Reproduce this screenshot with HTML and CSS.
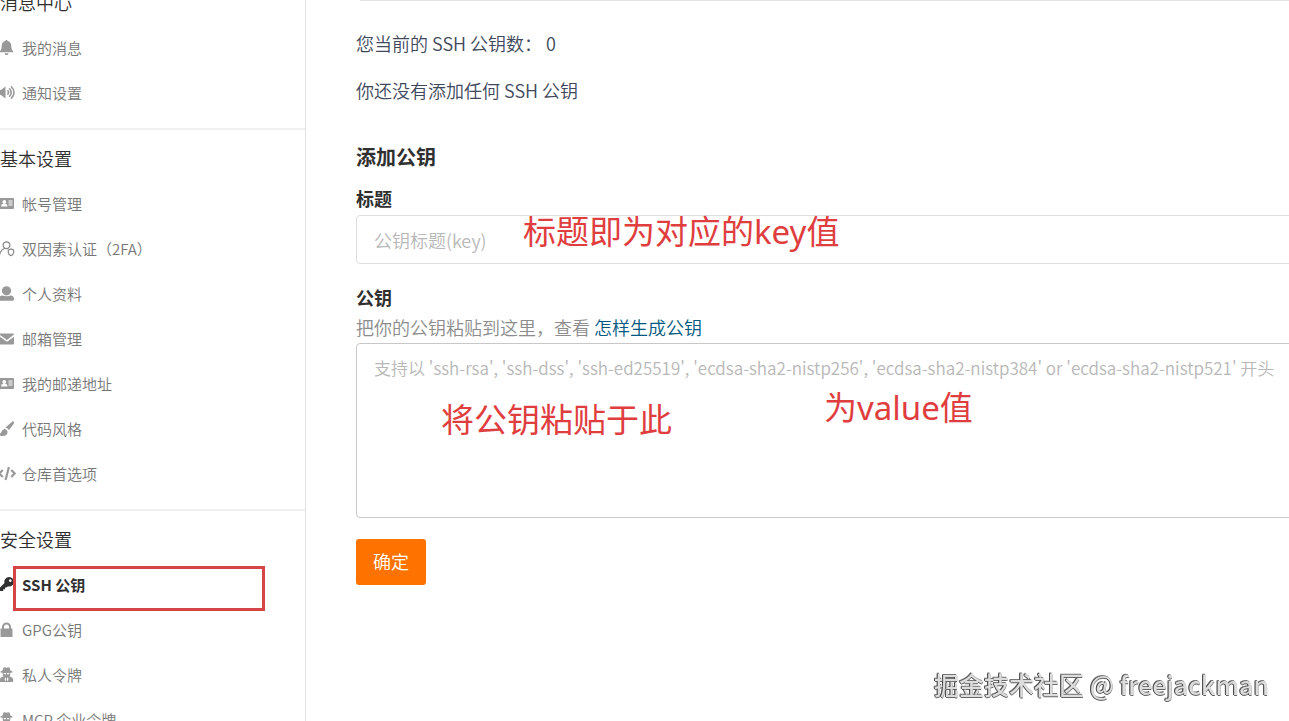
FILE: index.html
```html
<!DOCTYPE html>
<html lang="zh-CN">

<head>
<meta charset="utf-8">
<title>SSH 公钥</title>
<link rel="stylesheet" href="styles.css">
</head>

<body>
    <!-- icon shapes used by the menu -->
    <svg class="sprite" aria-hidden="true">
        <symbol id="i-bell" viewBox="0 0 16 16"><path d="M6.500 0c.8 0 1.100.5 1.100 1.100 2.300.5 3.700 2.300 3.700 4.800 0 2.700.8 4.200 2 5.500v.9H-.2v-.9c1.200-1.300 1.900-2.800 1.900-5.500C1.700 3.400 3.100 1.600 5.400 1.100c0-.6.3-1.100 1.100-1.100zM4.600 13.200h3.800c0 1.200-.8 1.900-1.900 1.900s-1.900-.7-1.900-1.900z"/></symbol>
        <symbol id="i-sound" viewBox="0 0 16 16"><path d="M-2 5h3l4.500-3.500v12L1 10h-3z"/><path class="line" d="M7.500 5.300q2 2.200 0 4.400M9.200 3.200q4 4.300 0 8.600M11 1.200q6 6.300 0 12.600"/></symbol>
        <symbol id="i-card" viewBox="0 0 16 16"><path fill-rule="evenodd" d="M-1 2h14q1 0 1 1v9q0 1-1 1H-1zM4.300 4a1.900 1.900 0 1 0 .01 0zM1 10.500h6.500q0-2.700-2-2.700h-2.500q-2 0-2 2.700zM8.500 4.500v1h4v-1zM8.500 6.500v1h4v-1zM8.500 8.500v1h4v-1z"/></symbol>
        <symbol id="i-user2" viewBox="0 0 16 16"><path class="thin" d="M3.100 4.200a3.400 3.400 0 1 1 6.800 0a3.400 3.400 0 1 1-6.800 0M-.5 14.500Q0 9.500 4.700 7.300M8.300 9l2.700-1 2.600 1v2.500q0 2-2.600 3.200-2.700-1.200-2.700-3.200z"/></symbol>
        <symbol id="i-user" viewBox="0 0 16 16"><circle cx="6.500" cy="4.800" r="4.600"/><path d="M-1 13q0-3.500 3.500-3.500 4 1.600 8 0Q14 9.500 14 13q0 1.800-1.500 1.800H-1z"/></symbol>
        <symbol id="i-mail" viewBox="0 0 16 16"><path d="M-1 2.500h14q1 0 1 1L7 9 0 4zM0 5.800l7 5 7-5v6.700q0 1-1 1H-1V5.200z"/></symbol>
        <symbol id="i-brush" viewBox="0 0 16 16"><path d="M12.600.3q1.600-.2 1.400 1.500-.1.700-.6 1.500L9 9Q7.800 7 5.500 6.400zM4.600 7.700q2 .6 3 2.700Q7.500 15 2.500 15-.5 15-1 12q1.500.8 2-.3.800-3.200 3.600-4z"/></symbol>
        <symbol id="i-code" viewBox="0 0 16 16"><path class="line code" d="M2.800 4-.7 7.500l3.500 3.500M8.900 1 5.600 14M11.200 4l3.500 3.500-3.500 3.500"/></symbol>
        <symbol id="i-key" viewBox="0 0 16 16"><path fill-rule="evenodd" d="M9 0a4.800 4.800 0 1 1-1.300 9.400L6.500 10.600H5v1.700H3.200V14H0v-3.500l4.500-4.400A4.800 4.800 0 0 1 9 0zM10.300 2.200a1.400 1.400 0 1 0 .01 0z"/></symbol>
        <symbol id="i-lock" viewBox="0 0 16 16"><path fill-rule="evenodd" d="M1 6.500h1V5a4.500 4.500 0 0 1 9 0v1.500h1q.5 0 .5.500v7.500q0 .5-.5.500H1q-.5 0-.5-.5V7q0-.5.5-.5zM4 6.500h5V5a2.500 2.500 0 0 0-5 0z"/></symbol>
        <symbol id="i-spy" viewBox="0 0 16 16"><path fill-rule="evenodd" d="M3.500.5q1-.5 3 .3 2-.8 3-.3l1 3 2 .9v1l-2.200.4Q10.500 8.500 9.500 9.500q3.700.5 3.700 3.500v1q0 1-1 1H.8q-1 0-1-1v-1q0-3 3.700-3.500-1-1-.8-3.700L.5 5.400v-1l2-.9zM3.800 6v1.200h2.300V6zM7 6v1.200h2.300V6zM5 10.200 4.700 13l1.200 1.300.2-3zM8 10.200l-1 1.100.1 3L8.400 13z"/></symbol>
    </svg>

    <div class="page">
        <nav class="sidebar">
            <section class="group">
                <h3>消息中心</h3>
                <a href="#"><svg><use href="#i-bell"/></svg>我的消息</a>
                <a href="#"><svg><use href="#i-sound"/></svg>通知设置</a>
            </section>
            <section class="group">
                <h3>基本设置</h3>
                <a href="#"><svg><use href="#i-card"/></svg>帐号管理</a>
                <a href="#"><svg><use href="#i-user2"/></svg>双因素认证（2FA）</a>
                <a href="#"><svg><use href="#i-user"/></svg>个人资料</a>
                <a href="#"><svg><use href="#i-mail"/></svg>邮箱管理</a>
                <a href="#"><svg><use href="#i-card"/></svg>我的邮递地址</a>
                <a href="#"><svg><use href="#i-brush"/></svg>代码风格</a>
                <a href="#"><svg><use href="#i-code"/></svg>仓库首选项</a>
            </section>
            <section class="group">
                <h3>安全设置</h3>
                <a href="#" class="active"><svg><use href="#i-key"/></svg>SSH 公钥<span class="mark"></span></a>
                <a href="#"><svg><use href="#i-lock"/></svg>GPG公钥</a>
                <a href="#"><svg><use href="#i-spy"/></svg>私人令牌</a>
                <a href="#"><svg><use href="#i-spy"/></svg>MCP 企业令牌</a>
            </section>
        </nav>

        <main class="content">
            <hr>
            <p>您当前的 SSH 公钥数： 0</p>
            <p>你还没有添加任何 SSH 公钥</p>
            <form>
                <h2>添加公钥</h2>
                <div class="field">
                    <label for="title">标题</label>
                    <input type="text" id="title" placeholder="公钥标题(key)">
                    <span class="note note-title">标题即为对应的key值</span>
                </div>
                <div class="field">
                    <label for="key">公钥</label>
                    <div class="help">把你的公钥粘贴到这里，查看 <a href="#">怎样生成公钥</a></div>
                    <textarea id="key" placeholder="支持以 'ssh-rsa', 'ssh-dss', 'ssh-ed25519', 'ecdsa-sha2-nistp256', 'ecdsa-sha2-nistp384' or 'ecdsa-sha2-nistp521' 开头"></textarea>
                    <span class="note note-key">将公钥粘贴于此</span>
                    <span class="note note-value">为value值</span>
                </div>
                <button type="submit">确定</button>
            </form>
        </main>
    </div>
    <div class="watermark">掘金技术社区 @ freejackman</div>
</body>
</html>
```
FILE: styles.css
```css
* {
    box-sizing: border-box;
}
body {
    margin: 0;
    height: 100vh;
    overflow: hidden;
    background-color: #fff;
    color: #40485b;
    font-family: "Noto Sans CJK SC", sans-serif;
    font-size: 18px;
    font-weight: 350;
    line-height: 26px;
}
.sprite {
    position: absolute;
    width: 0;
    height: 0;
}
.page {
    display: flex;
    height: 100vh;
    overflow: hidden;
}

/* left menu, scrolled a little */
.sidebar {
    flex: 0 0 306px;
    border-right: 1px solid #e3e3e3;
}
.group {
    padding: 5px 0 13px;
    border-bottom: 2px solid #f0f0f0;
}
.group:first-child {
    margin-top: -26px;
}
.group h3 {
    margin: 0;
    color: #303030;
    font-size: 18px;
    font-weight: 350;
    line-height: 46px;
}
.group a {
    position: relative;
    display: flex;
    align-items: center;
    gap: 6px;
    height: 45px;
    color: #777;
    font-size: 15px;
    text-decoration: none;
}
.group svg {
    width: 16px;
    height: 16px;
    fill: #999;
}
.line {
    fill: none;
    stroke: #999;
    stroke-width: 1.6;
}
.code {
    stroke-width: 2.2;
}
.thin {
    fill: none;
    stroke: #888;
    stroke-width: 1.2;
}
.group a.active {
    color: #303030;
    font-weight: bold;
}
.group .active svg {
    fill: #303030;
}
.mark {
    position: absolute;
    top: 4px;
    left: 13px;
    right: 40px;
    height: 45px;
    border: 3px solid #d64545;
}

/* right part */
.content {
    flex: 1;
    min-width: 0;
    padding-left: 50px;
}
.content hr {
    height: 1px;
    margin: 0 0 29px 4px;
    border: 0;
    background-color: #e3e3e3;
}
.content p {
    margin: 0 0 21px;
}
form {
    margin-right: -20px;
    padding-top: 19px;
}
h2 {
    margin: 0 0 14px;
    color: #303030;
    font-size: 20px;
    font-weight: bold;
    line-height: 28px;
}
.field {
    position: relative;
    margin-bottom: 20px;
}
.field label {
    display: block;
    padding-bottom: 4px;
    color: #303030;
    font-weight: bold;
}
.field input,
.field textarea {
    display: block;
    width: 100%;
    padding: 11px 17px;
    border: 1px solid #dedede;
    border-radius: 4px;
    background-color: #fff;
    font: inherit;
}
.field input {
    height: 49px;
}
.field textarea {
    height: 175px;
    border-color: #c8c8c8;
    font-size: 17px;
    resize: none;
}
.field ::placeholder {
    color: #b8b8b8;
}
.help {
    padding-bottom: 3px;
    color: #8c8c8c;
}
.help a {
    color: #005980;
    text-decoration: none;
}
button {
    width: 70px;
    height: 46px;
    margin-top: 1px;
    padding: 0 0 2px;
    border: 0;
    border-radius: 3px;
    background-color: #fe7300;
    color: #fff;
    font: inherit;
}

/* red remarks */
.note {
    position: absolute;
    color: #e03e3e;
    font-family: "Noto Sans", "Noto Sans CJK SC", sans-serif;
    font-size: 33px;
    font-weight: 400;
    line-height: 40px;
    white-space: nowrap;
    pointer-events: none;
}
.note-title {
    top: 27px;
    left: 167px;
}
.note-key {
    top: 116px;
    left: 85px;
}
.note-value {
    top: 104px;
    left: 468px;
}

.watermark {
    position: fixed;
    right: 20px;
    bottom: 20px;
    color: #dcdcdc;
    font-size: 25px;
    font-weight: 500;
    line-height: 34px;
    text-shadow: -1px 0 0 #444, 0 1px 0 #666, -1px -1px 0 #777;
}
```
